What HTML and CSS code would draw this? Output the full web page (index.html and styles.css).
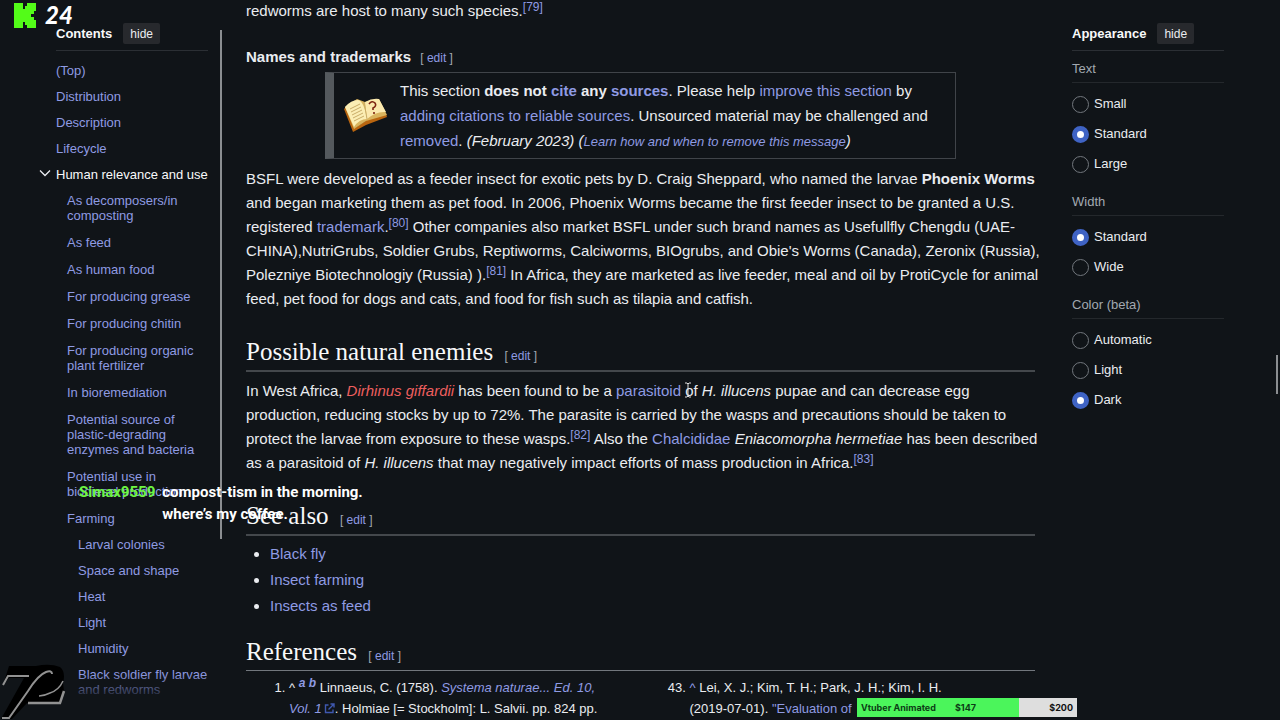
FILE: index.html
```html
<!DOCTYPE html>
<html lang="en">
<head>
<meta charset="utf-8">
<title>Black soldier fly</title>
<link rel="stylesheet" href="styles.css">
</head>
<body>
<div class="page">
  <nav class="toc" aria-label="Contents">
    <div class="panel-head"><h2 class="panel-title">Contents</h2><button class="hide" type="button">hide</button></div>
    <ul class="toc-list">
      <li><a href="#">(Top)</a></li>
      <li><a href="#">Distribution</a></li>
      <li><a href="#">Description</a></li>
      <li><a href="#">Lifecycle</a></li>
      <li class="open">
        <button class="toggle" type="button" aria-label="Toggle subsection"><svg width="12" height="8" viewBox="0 0 12 8"><path d="M1 1.5l5 5 5-5" fill="none" stroke="#eaecf0" stroke-width="1.3"/></svg></button>
        <a class="current" href="#">Human relevance and use</a>
        <ul class="toc-list level2">
          <li><a href="#">As decomposers/in<br>composting</a></li>
          <li><a href="#">As feed</a></li>
          <li><a href="#">As human food</a></li>
          <li><a href="#">For producing grease</a></li>
          <li><a href="#">For producing chitin</a></li>
          <li><a href="#">For producing organic<br>plant fertilizer</a></li>
          <li><a href="#">In bioremediation</a></li>
          <li><a href="#">Potential source of<br>plastic-degrading<br>enzymes and bacteria</a></li>
          <li><a href="#">Potential use in<br>biodiesel production</a></li>
          <li><a href="#">Farming</a>
            <ul class="toc-list level3">
              <li><a href="#">Larval colonies</a></li>
              <li><a href="#">Space and shape</a></li>
              <li><a href="#">Heat</a></li>
              <li><a href="#">Light</a></li>
              <li><a href="#">Humidity</a></li>
              <li><a href="#">Black soldier fly larvae<br>and redworms</a></li>
            </ul>
          </li>
        </ul>
      </li>
    </ul>
    <div class="toc-fade"></div>
    <div class="toc-scroll"></div>
  </nav>

  <main class="content">
    <p class="lead">redworms are host to many such species.<sup><a href="#">[79]</a></sup></p>
    <h3 class="sub">Names and trademarks <span class="edit">[ <a href="#">edit</a> ]</span></h3>
    <div class="notice">
      <svg class="book" width="46" height="36" viewBox="0 0 46 36">
        <path d="M1 11L10 34L23 27L44 19L43 16L24 22L12 30L3 9Z" fill="#b9650f"/>
        <path d="M2 9L11 31L23 23L44 17L36 1L22 4L14 1Z" fill="#d9b45e"/>
        <path d="M2 9Q8 2 15 2Q21 3 24 21Q16 21 11 29Z" fill="#fbeeb4"/>
        <path d="M22 4Q29 0 36 1L43 14Q33 13 24 21Z" fill="#fbe9ae"/>
        <path d="M21 4L24 21M7 11l10-5M8 14l10-5M9 17l10-5M10 20l10-5M11 23l10-5" stroke="#c9ad68" fill="none"/>
        <path d="M26 6Q29 2 32 5Q34 8 30 10V12M31 14v2" stroke="#7d2412" stroke-width="1.600" fill="none"/>
      </svg>
      <p>This section <b>does not <a href="#">cite</a> any <a href="#">sources</a></b>. Please help <a href="#">improve this section</a> by<br><a href="#">adding citations to reliable sources</a>. Unsourced material may be challenged and<br><a href="#">removed</a>. <i>(February 2023)</i> <i>(<a class="small" href="#">Learn how and when to remove this message</a>)</i></p>
    </div>
    <p class="body">BSFL were developed as a feeder insect for exotic pets by D. Craig Sheppard, who named the larvae <b>Phoenix Worms</b><br>and began marketing them as pet food. In 2006, Phoenix Worms became the first feeder insect to be granted a U.S.<br>registered <a href="#">trademark</a>.<sup><a href="#">[80]</a></sup> Other companies also market BSFL under such brand names as Usefullfly Chengdu (UAE-<br>CHINA),NutriGrubs, Soldier Grubs, Reptiworms, Calciworms, BIOgrubs, and Obie's Worms (Canada), Zeronix (Russia),<br>Polezniye Biotechnologiy (Russia) ).<sup><a href="#">[81]</a></sup> In Africa, they are marketed as live feeder, meal and oil by ProtiCycle for animal<br>feed, pet food for dogs and cats, and food for fish such as tilapia and catfish.</p>
    <h2 class="section">Possible natural enemies <span class="edit">[ <a href="#">edit</a> ]</span></h2>
    <p class="body">In West Africa, <a class="missing" href="#"><i>Dirhinus giffardii</i></a> has been found to be a <a href="#">parasitoid</a> of <i>H. illucens</i> pupae and can decrease egg<br>production, reducing stocks by up to 72%. The parasite is carried by the wasps and precautions should be taken to<br>protect the larvae from exposure to these wasps.<sup><a href="#">[82]</a></sup> Also the <a href="#">Chalcididae</a> <i>Eniacomorpha hermetiae</i> has been described<br>as a parasitoid of <i>H. illucens</i> that may negatively impact efforts of mass production in Africa.<sup><a href="#">[83]</a></sup></p>
    <h2 class="section">See also <span class="edit">[ <a href="#">edit</a> ]</span></h2>
    <ul class="links">
      <li><a href="#">Black fly</a></li>
      <li><a href="#">Insect farming</a></li>
      <li><a href="#">Insects as feed</a></li>
    </ul>
    <h2 class="section refs-title">References <span class="edit">[ <a href="#">edit</a> ]</span></h2>
    <div class="refs">
      <ol class="ref"><li>^ <sup class="back"><a href="#">a</a> <a href="#">b</a></sup> Linnaeus, C. (1758). <a href="#"><i>Systema naturae... Ed. 10,<br>Vol. 1</i><svg class="ext" width="11" height="11" viewBox="0 0 11 11"><path d="M4.500 2H1.500v7.500H9V6.500M6.500 1H10v3.500M10 1L4.500 6.500" fill="none" stroke="#3f58b0" stroke-width="1.400"/></svg></a>. Holmiae [= Stockholm]: L. Salvii. pp. 824 pp.</li></ol>
      <ol class="ref" start="43"><li><a href="#">^</a> Lei, X. J.; Kim, T. H.; Park, J. H.; Kim, I. H.<br>(2019-07-01). <a href="#">"Evaluation of</a></li></ol>
    </div>
  </main>

  <aside class="appearance">
    <div class="panel-head"><h2 class="panel-title">Appearance</h2><button class="hide" type="button">hide</button></div>
    <fieldset><legend>Text</legend>
      <label><input type="radio" name="text">Small</label>
      <label><input type="radio" name="text" checked>Standard</label>
      <label><input type="radio" name="text">Large</label>
    </fieldset>
    <fieldset><legend>Width</legend>
      <label><input type="radio" name="width" checked>Standard</label>
      <label><input type="radio" name="width">Wide</label>
    </fieldset>
    <fieldset><legend>Color (beta)</legend>
      <label><input type="radio" name="color">Automatic</label>
      <label><input type="radio" name="color">Light</label>
      <label><input type="radio" name="color" checked>Dark</label>
    </fieldset>
  </aside>
</div>

<div class="viewers">
  <svg width="22" height="25" viewBox="0 0 22 25"><path d="M0 0H9V6H11V3H13V0H22V8H20V11H17V14H20V17H22V25H13V22H11V19H9V25H0Z" fill="#53fc18"/></svg>
  <span>24</span>
</div>
<div class="chat"><span class="chat-name">Simax9559</span><span>compost-tism in the morning.<br>where’s my coffee.</span></div>
<svg class="mark" width="66" height="56" viewBox="0 0 66 56">
  <path d="M3 21L9 2H36Q50 -1 60 3Q66 8 63 19L64 27L60 39H27L12 55H1L24 14H9Z" fill="#000"/>
  <path d="M3 21L8 12H29" fill="none" stroke="#929292" stroke-width="2"/>
  <path d="M2 54H9L28 27Q38 11 46 8Q52 6 52 10" fill="none" stroke="#929292" stroke-width="2"/>
  <path d="M63 17Q59 26 50 29Q44 32 39 32" fill="none" stroke="#929292" stroke-width="1.500"/>
  <path d="M28 39H60L64 27" fill="none" stroke="#929292" stroke-width="2.500"/>
</svg>
<div class="goal"><div class="goal-fill"><span>Vtuber Animated</span><span>$147</span></div><span class="goal-end">$200</span></div>
<svg class="cursor" width="8" height="16" viewBox="0 0 8 16"><path d="M1 1H3L4 2L5 1H7M4 2V14M1 15H3L4 14L5 15H7" fill="none" stroke="#ddd"/></svg>
<div class="page-scroll"></div>
</body>
</html>
```
FILE: styles.css
```css
* { box-sizing: border-box; }
body { margin: 0; height: 100vh; overflow: hidden; position: relative; background: #101418; color: #eaecf0; font-family: "Liberation Sans", Arial, sans-serif; font-size: 15px; line-height: 24px; }
a { color: #8f9be3; text-decoration: none; }
h2, h3, p, ul, ol { margin: 0; padding: 0; }
button { font: inherit; color: inherit; border: 0; cursor: pointer; }
.page { display: grid; grid-template-columns: 222px minmax(0, 1fr) 208px; height: 100%; overflow: hidden; }

.toc { position: relative; padding: 23px 14px 0 56px; font-size: 13px; line-height: 15px; white-space: nowrap; }
.panel-head { display: flex; align-items: center; gap: 11px; padding-bottom: 6px; border-bottom: 1px solid #2b2f34; }
.panel-title { font-size: 13px; line-height: 20px; color: #f8f9fa; }
.hide { height: 21px; padding: 0 7px; background: #27292d; border-radius: 2px; font-size: 12px; line-height: 20px; }
.toc-list { list-style: none; display: flex; flex-direction: column; gap: 11px; }
.panel-head + .toc-list { padding-top: 12px; }
.level2 { gap: 12px; padding: 11px 0 0 11px; }
.level3 { padding: 11px 0 0 11px; }
.open { position: relative; }
.toggle { position: absolute; left: -17px; top: 2px; width: 12px; height: 8px; padding: 0; background: none; display: flex; }
.current { color: #f8f9fa; }
.toc-fade { position: absolute; left: 56px; right: 14px; top: 674px; height: 46px; background: linear-gradient(transparent, #101418 60%); }
.toc-scroll { position: absolute; right: 0; top: 30px; width: 2px; height: 509px; background: #8b8e91; }

.content { padding: 0 37px 0 24px; white-space: nowrap; }
.lead { line-height: 22px; }
sup { font-size: 12px; line-height: 0; vertical-align: 5px; }
.edit { margin-left: 5px; font: 12px/16px "Liberation Sans", Arial, sans-serif; color: #a2a9b1; }
.sub { margin-top: 23px; font-size: 15px; line-height: 24px; }
.notice { display: flex; align-items: center; margin: 3px 79px 8px; padding: 5px 9px 4px; gap: 11px; border: 1px solid #404449; border-left: 9px solid #54595d; line-height: 25px; }
.book { flex: none; }
.small { font-size: 13px; }
.missing { color: #ee5f5f; }
.section { margin-top: 26px; margin-bottom: 7px; padding-bottom: 3px; border-bottom: 2px solid #44484c; font: 25px/30px "Liberation Serif", Georgia, serif; color: #f8f9fa; }
.links { margin-top: -2px; padding-left: 24px; line-height: 26px; }
.section.refs-title { margin-top: 18px; margin-bottom: 6px; border-bottom-width: 1px; border-color: #72777d; }
.refs { display: grid; grid-template-columns: 1fr 1fr; font-size: 13px; line-height: 21px; }
.ref { padding-left: 43px; }
.ref + .ref { padding-left: 49px; }
.back { font-style: italic; font-weight: bold; }
.ext { margin-left: 2px; vertical-align: -1px; }

.appearance { padding: 23px 56px 0 0; font-size: 13px; }
fieldset { margin: 0 0 5px; padding: 0; border: 0; }
legend { width: 100%; padding: 8px 0 3px; margin-bottom: 6px; border-bottom: 1px solid #24282c; line-height: 20px; color: #a2a9b1; }
label { display: flex; align-items: center; gap: 5px; height: 30px; color: #eaecf0; }
input { appearance: none; width: 17px; height: 17px; margin: 0; border: 1px solid #72777d; border-radius: 50%; }
input:checked { border: 5px solid #3f63c4; background: #fff; }

.viewers { position: absolute; left: 14px; top: 1px; display: flex; align-items: center; gap: 9px; font: italic 900 24px/28px Lato, sans-serif; color: #fff; }
.chat { position: absolute; left: 79px; top: 481px; display: flex; gap: 7px; font: 700 15px/22px Roboto, sans-serif; color: #fff; }
.chat-name { color: #6df542; }
.mark { position: absolute; left: 0; top: 664px; }
.goal { position: absolute; left: 857px; bottom: 3px; width: 220px; height: 19px; display: flex; align-items: center; justify-content: space-between; background: #dedede; color: #111; font: 700 9px/19px Inter, sans-serif; }
.goal-fill { display: flex; justify-content: space-between; width: 162px; padding: 0 43px 0 4px; background: #4bf55b; color: #0d3d16; }
.goal-end { padding-right: 4px; }
.cursor { position: absolute; left: 684px; top: 382px; }
.page-scroll { position: absolute; right: 2px; top: 355px; width: 2px; height: 39px; background: #8b8e91; }
```
